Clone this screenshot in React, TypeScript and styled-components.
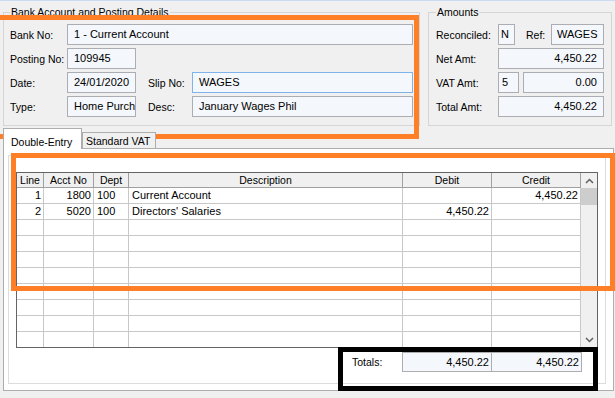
import React from 'react';
import styled, { createGlobalStyle } from 'styled-components';

const GlobalStyle = createGlobalStyle`
  html, body {
    margin: 0;
    padding: 0;
    background: #f0f0f0;
  }

  *, *::before, *::after {
    box-sizing: border-box;
  }
`;

const Window = styled.div`
  position: relative;
  width: 615px;
  height: 398px;
  overflow: hidden;
  padding: 5px 0 0 3px;
  background: #f0f0f0;
  border-top: 1px solid #c9dcf2;
  font-family: "Liberation Sans", Arial, sans-serif;
  font-size: 10.5px;
  color: #000;
`;

const TopRow = styled.div`
  display: flex;
  gap: 8px;
  align-items: stretch;
`;

const GroupBox = styled.fieldset<{ $width: number; $padX: number }>`
  width: ${({ $width }) => $width}px;
  min-width: 0;
  margin: 0;
  padding: 5px ${({ $padX }) => $padX}px 8px;
  border: 1px solid #d5d5d5;

  legend {
    padding: 0 1px;
    margin: 0;
    line-height: 13px;
  }
`;

const FieldGrid = styled.div<{ $columns: string }>`
  display: grid;
  grid-template-columns: ${({ $columns }) => $columns};
  grid-auto-rows: 21px;
  row-gap: 3px;
  align-items: center;
`;

const Label = styled.span<{ $span?: string }>`
  white-space: nowrap;
  grid-column: ${({ $span }) => $span ?? 'auto'};
`;

const Field = styled.div<{ $align?: 'left' | 'right'; $focus?: boolean; $span?: string; $width?: number; $pad?: number }>`
  grid-column: ${({ $span }) => $span ?? 'auto'};
  ${({ $width }) => ($width ? `width: ${$width}px; flex: none;` : 'flex: 1;')}
  height: 21px;
  padding: 0 ${({ $pad }) => $pad ?? 6}px;
  line-height: 19px;
  font-size: 11px;
  text-align: ${({ $align }) => $align ?? 'left'};
  white-space: nowrap;
  overflow: hidden;
  background: #f4f7fc;
  border: 1px solid ${({ $focus }) => ($focus ? '#7eb4ea' : '#abadb3')};
`;

const FieldRow = styled.div`
  display: flex;
  align-items: center;
  height: 21px;
`;

const RefLabel = styled.span`
  flex: 1;
  margin-left: 11px;
  white-space: nowrap;
`;

const Spacer = styled.span<{ $w: number }>`
  width: ${({ $w }) => $w}px;
  flex: none;
`;

const TabStrip = styled.div`
  position: relative;
  z-index: 1;
  display: flex;
  align-items: flex-end;
  height: 21px;
  margin-top: 2px;
  margin-bottom: -1px;
`;

const Tab = styled.div<{ $active?: boolean; $width: number }>`
  width: ${({ $width }) => $width}px;
  height: ${({ $active }) => ($active ? 21 : 17)}px;
  padding: ${({ $active }) => ($active ? '6px 0 0 7px' : '1px 0 0 3px')};
  line-height: 14px;
  white-space: nowrap;
  background: ${({ $active }) => ($active ? '#fff' : '#f0f0f0')};
  border: 1px solid #adadad;
  border-bottom: ${({ $active }) => ($active ? 'none' : '1px solid #adadad')};
`;

const TabPanel = styled.div`
  width: 611px;
  padding: 6px 7px 6px 4px;
  background: #fff;
  border: 1px solid #adadad;
`;

const InnerPanel = styled.div`
  padding: 16px 7px 11px;
  background: #fff;
  border: 1px solid #dcdcdc;
`;

const Grid = styled.div`
  display: flex;
  border: 1px solid #646464;
`;

const Rows = styled.div`
  display: flex;
  flex-direction: column;
  width: 564px;
`;

const COLUMNS = '27px 50px 35px 274px 89px 89px';

const HeaderRow = styled.div`
  display: grid;
  grid-template-columns: ${COLUMNS};
  height: 15px;
  background: #f0f0f0;
  border-bottom: 1px solid #a0a0a0;
`;

const HeaderCell = styled.div`
  line-height: 14px;
  text-align: center;
  white-space: nowrap;
  border-right: 1px solid #a0a0a0;
`;

const Row = styled.div`
  display: grid;
  grid-template-columns: ${COLUMNS};
  height: 16px;
  border-bottom: 1px solid #c8c8c8;

  &:last-child {
    height: 15px;
    border-bottom: none;
  }
`;

const Cell = styled.div<{ $align?: 'left' | 'right' }>`
  padding: 0 ${({ $align }) => ($align === 'right' ? '2px 0 0' : '0 0 3px')};
  line-height: 15px;
  font-size: 11px;
  text-align: ${({ $align }) => $align ?? 'left'};
  white-space: nowrap;
  overflow: hidden;
  border-right: 1px solid #c8c8c8;
`;

const Scrollbar = styled.div`
  display: flex;
  flex-direction: column;
  width: 16px;
  background: #f0f0f0;
`;

const ScrollArrow = styled.div`
  display: flex;
  align-items: center;
  justify-content: center;
  height: 15px;
`;

const Thumb = styled.div`
  height: 17px;
  background: #cdcdcd;
`;

const ScrollTrack = styled.div`
  flex: 1;
`;

const TotalsRow = styled.div`
  display: flex;
  justify-content: flex-end;
  align-items: center;
  margin-top: 4px;
  padding-right: 16px;
`;

const TotalsLabel = styled.span`
  width: 50px;
  white-space: nowrap;
`;

const TotalBox = styled.div<{ $joined?: boolean }>`
  width: 90px;
  height: 20px;
  padding-right: 2px;
  line-height: 18px;
  font-size: 11px;
  text-align: right;
  background: #f4f7fc;
  border: 1px solid #adadad;
  border-left: ${({ $joined }) => ($joined ? 'none' : '1px solid #adadad')};
`;

const Annotation = styled.div<{ $color: string; $top: number; $left: number; $w: number; $h: number }>`
  position: absolute;
  top: ${({ $top }) => $top}px;
  left: ${({ $left }) => $left}px;
  width: ${({ $w }) => $w}px;
  height: ${({ $h }) => $h}px;
  border: 5px solid ${({ $color }) => $color};
  pointer-events: none;
`;

function Chevron({ up }: { up?: boolean }) {
  return (
    <svg width="9" height="6" viewBox="0 0 9 6">
      <polyline
        points={up ? '1,5 4.5,1.5 8,5' : '1,1 4.5,4.5 8,1'}
        fill="none"
        stroke="#606060"
        strokeWidth="1.5"
      />
    </svg>
  );
}

const lines = [
  { line: '1', acct: '1800', dept: '100', desc: 'Current Account', debit: '', credit: '4,450.22' },
  { line: '2', acct: '5020', dept: '100', desc: "Directors' Salaries", debit: '4,450.22', credit: '' },
];

export default function App() {
  const rows = [...lines, ...Array.from({ length: 8 }, () => null)];

  return (
    <>
      <GlobalStyle />
      <Window>
        <TopRow>
          <GroupBox $width={417} $padX={6}>
            <legend>Bank Account and Posting Details</legend>
            <FieldGrid $columns="57px 69px 12px 44px 1fr">
              <Label>Bank No:</Label>
              <Field $span="2 / 6">1 - Current Account</Field>

              <Label>Posting No:</Label>
              <Field>109945</Field>
              <Label $span="3 / 6" />

              <Label>Date:</Label>
              <Field>24/01/2020</Field>
              <span />
              <Label>Slip No:</Label>
              <Field $focus>WAGES</Field>

              <Label>Type:</Label>
              <Field>Home Purch</Field>
              <span />
              <Label>Desc:</Label>
              <Field>January Wages Phil</Field>
            </FieldGrid>
          </GroupBox>

          <GroupBox $width={184} $padX={7}>
            <legend>Amounts</legend>
            <FieldGrid $columns="62px 1fr">
              <Label>Reconciled:</Label>
              <FieldRow>
                <Field $width={17} $pad={2}>N</Field>
                <RefLabel>Ref:</RefLabel>
                <Field $width={53} $pad={5}>WAGES</Field>
              </FieldRow>

              <Label>Net Amt:</Label>
              <Field $align="right">4,450.22</Field>

              <Label>VAT Amt:</Label>
              <FieldRow>
                <Field $width={21} $pad={3}>5</Field>
                <Spacer $w={4} />
                <Field $align="right">0.00</Field>
              </FieldRow>

              <Label>Total Amt:</Label>
              <Field $align="right">4,450.22</Field>
            </FieldGrid>
          </GroupBox>
        </TopRow>

        <TabStrip>
          <Tab $active $width={79}>Double-Entry</Tab>
          <Tab $width={74}>Standard VAT</Tab>
        </TabStrip>

        <TabPanel>
          <InnerPanel>
            <Grid>
              <Rows>
                <HeaderRow>
                  <HeaderCell>Line</HeaderCell>
                  <HeaderCell>Acct No</HeaderCell>
                  <HeaderCell>Dept</HeaderCell>
                  <HeaderCell>Description</HeaderCell>
                  <HeaderCell>Debit</HeaderCell>
                  <HeaderCell>Credit</HeaderCell>
                </HeaderRow>
                {rows.map((r, i) => (
                  <Row key={i}>
                    <Cell $align="right">{r?.line}</Cell>
                    <Cell $align="right">{r?.acct}</Cell>
                    <Cell>{r?.dept}</Cell>
                    <Cell>{r?.desc}</Cell>
                    <Cell $align="right">{r?.debit}</Cell>
                    <Cell $align="right">{r?.credit}</Cell>
                  </Row>
                ))}
              </Rows>
              <Scrollbar>
                <ScrollArrow><Chevron up /></ScrollArrow>
                <Thumb />
                <ScrollTrack />
                <ScrollArrow><Chevron /></ScrollArrow>
              </Scrollbar>
            </Grid>

            <TotalsRow>
              <TotalsLabel>Totals:</TotalsLabel>
              <TotalBox>4,450.22</TotalBox>
              <TotalBox $joined>4,450.22</TotalBox>
            </TotalsRow>
          </InnerPanel>
        </TabPanel>

        <Annotation $color="#ff7f27" $top={14} $left={-10} $w={429} $h={124} />
        <Annotation $color="#ff7f27" $top={152} $left={11} $w={604} $h={138} />
        <Annotation $color="#000" $top={346} $left={338} $w={260} $h={44} />
      </Window>
    </>
  );
}
